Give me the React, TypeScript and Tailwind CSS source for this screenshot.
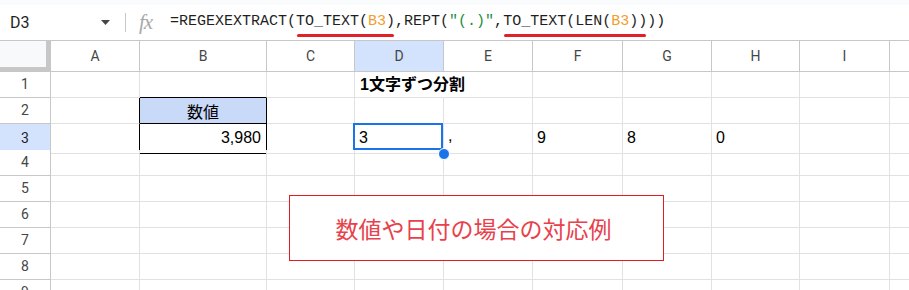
import React from "react";

const cols = ["A", "B", "C", "D", "E", "F", "G", "H", "I", ""];
const rows = [1, 2, 3, 4, 5, 6, 7, 8, 9];

const grid = "grid grid-cols-[51px_89px_127px_88px_89px_89px_90px_89px_88px_90px_1fr]";
const cellFont = { fontFamily: '"Liberation Sans", Arial, "Noto Sans CJK JP", sans-serif' };

function Underlined({ children }: { children: React.ReactNode }) {
  return (
    <span className="relative">
      {children}
      <span className="absolute left-[1px] right-[1px] bottom-[-7px] h-[3px] rounded-full bg-[#e3202a]" />
    </span>
  );
}

function FormulaBar() {
  return (
    <div className="h-[41px] flex flex-col border-b border-[#c7c7c7]">
      <div className="h-[5px] bg-[#f9fbfd]" />
      <div className="flex-1 flex items-center bg-white">
        <div className="w-[96px] pl-[10px] text-[16px] text-[#1f1f1f]" style={{ fontFamily: "Roboto, Arial, sans-serif" }}>
          D3
        </div>
        <svg width="9" height="5" viewBox="0 0 9 5" className="ml-[5px]">
          <path d="M0 0h9L4.5 5z" fill="#444746" />
        </svg>
        <div className="ml-[15px] w-px h-[19px] bg-[#c7c7c7]" />
        <div
          className="ml-[13px] w-[19px] text-[21px] italic text-[#a8a8a8] leading-none tracking-[-1px]"
          style={{ fontFamily: '"Liberation Serif", "DejaVu Serif", serif' }}
        >
          fx
        </div>
        <div
          className="ml-[12px] text-[15px] text-[#1f1f1f] whitespace-pre"
          style={{ fontFamily: '"Liberation Mono", "DejaVu Sans Mono", monospace' }}
        >
          =REGEXEXTRACT(
          <Underlined>
            TO_TEXT(<span className="text-[#f29d2c]">B3</span>)
          </Underlined>
          ,REPT(<span className="text-[#1e8e3e]">"(.)"</span>,
          <Underlined>
            TO_TEXT(LEN(<span className="text-[#f29d2c]">B3</span>))
          </Underlined>
          ))
        </div>
      </div>
    </div>
  );
}

function ColumnHeader() {
  return (
    <div className={`${grid} h-[31px]`} style={{ fontFamily: "Roboto, Arial, sans-serif" }}>
      <div className="bg-[#f8f9fa] border-r-[5px] border-b-[5px] border-[#c7c7c7]" />
      {cols.map((c, i) => (
        <div
          key={i}
          className={`flex items-center justify-center text-[14px] text-[#444746] border-b border-[#c7c7c7] ${
            c ? "border-r" : ""
          } ${c === "D" ? "bg-[#d3e3fd] text-[#1f1f1f]" : "bg-white"}`}
        >
          {c}
        </div>
      ))}
    </div>
  );
}

function Cell({
  className = "",
  children,
}: {
  className?: string;
  children?: React.ReactNode;
}) {
  return (
    <div className={`relative flex border-r border-b border-[#e1e1e1] text-[16px] text-black ${className}`} style={cellFont}>
      {children}
    </div>
  );
}

function Row({ n }: { n: number }) {
  const selected = n === 3;
  return (
    <div className={`${grid} h-[26px]`}>
      <div
        className={`flex items-center justify-center text-[14px] border-r border-b border-[#c7c7c7] ${
          selected ? "bg-[#d3e3fd] text-[#1f1f1f]" : "bg-white text-[#444746]"
        }`}
        style={{ fontFamily: "Roboto, Arial, sans-serif" }}
      >
        {n}
      </div>
      {n === 1 && (
        <>
          <Cell />
          <Cell className="border-b-black" />
          <Cell />
          <Cell className="items-center pl-[5px] border-r-transparent z-10">
            <span className="font-bold whitespace-nowrap" style={{ fontFamily: 'Arial, "Liberation Sans", "Noto Sans CJK JP", sans-serif' }}>
              1文字ずつ分割
            </span>
          </Cell>
          <Cell />
          <Cell />
          <Cell />
          <Cell />
          <Cell />
          <Cell className="border-r-0" />
        </>
      )}
      {n === 2 && (
        <>
          <Cell className="border-r-black" />
          <Cell className="bg-[#c9daf8] border-r-black border-b-black items-center justify-center">
            <span style={{ fontFamily: '"Noto Sans CJK JP", sans-serif' }}>数値</span>
          </Cell>
          <Cell />
          <Cell />
          <Cell />
          <Cell />
          <Cell />
          <Cell />
          <Cell />
          <Cell className="border-r-0" />
        </>
      )}
      {n === 3 && (
        <>
          <Cell className="border-r-black" />
          <Cell className="border-r-black border-b-black items-end justify-end pr-[5px] pb-[3px]">3,980</Cell>
          <Cell />
          <Cell className="items-end pl-[4px] pb-[3px] z-20">
            3
            <div className="absolute left-[-2px] top-[-1px] w-[90px] h-[27px] border-2 border-[#1a73e8]" />
            <div className="absolute right-[-7px] bottom-[-7px] w-[12px] h-[12px] rounded-full bg-[#1a73e8] border border-white" />
          </Cell>
          <Cell className="items-end pl-[4px] pb-[5px] text-[14px]">,</Cell>
          <Cell className="items-end pl-[4px] pb-[3px]">9</Cell>
          <Cell className="items-end pl-[4px] pb-[3px]">8</Cell>
          <Cell className="items-end pl-[4px] pb-[3px]">0</Cell>
          <Cell />
          <Cell className="border-r-0" />
        </>
      )}
      {n > 3 && (
        <>
          {cols.map((c, i) => (
            <Cell key={i} className={c ? "" : "border-r-0"} />
          ))}
        </>
      )}
    </div>
  );
}

export default function App() {
  return (
    <div className="relative w-[909px] h-[290px] overflow-hidden bg-white">
      <FormulaBar />
      <ColumnHeader />
      {rows.map((n) => (
        <Row key={n} n={n} />
      ))}
      <div className="absolute left-[289px] top-[195px] w-[375px] h-[66px] border border-[#e31b23] bg-white flex items-center justify-center z-30">
        <span className="text-[23px] text-[#e8414c] pr-[6px]" style={{ fontFamily: '"Noto Sans CJK JP", sans-serif' }}>
          数値や日付の場合の対応例
        </span>
      </div>
    </div>
  );
}
